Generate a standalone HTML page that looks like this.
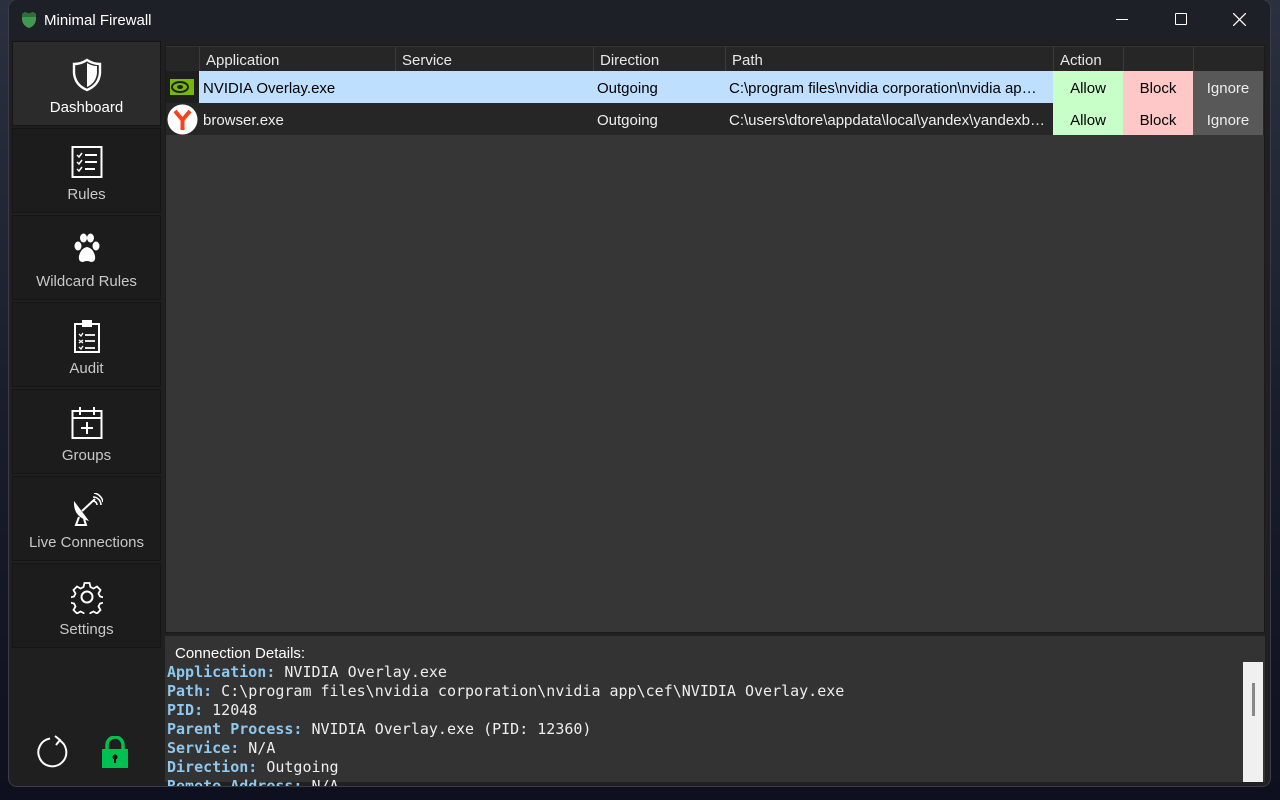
<!DOCTYPE html>
<html><head><meta charset="utf-8"><style>
*{margin:0;padding:0;box-sizing:border-box}
body{width:1280px;height:800px;overflow:hidden;background:linear-gradient(180deg,#2b3040 0%,#1a1d2c 50%,#0e1020 100%);font-family:"Segoe UI","Liberation Sans",sans-serif;position:relative}
.win{position:absolute;left:9px;top:0;width:1261px;height:786px;background:#202020;border-radius:8px;overflow:hidden;box-shadow:0 0 0 1px #3a3d44}
.title{position:absolute;left:0;top:0;width:100%;height:40px;background:#1e2027;color:#fff;font-size:15px}
.title .t{position:absolute;left:35px;top:12px}
.side{position:absolute;left:2px;top:40px;width:150px;height:746px;background:#1f1f1f}
.btn{position:absolute;left:1px;width:149px;height:85px;background:#1c1c1c;border:1px solid #151515;color:#c8c8c8;font-size:15px;text-align:center}
.btn.act{background:#2b2b2b;color:#fff}
.btn svg{position:absolute;left:58px;top:16px}
.btn span{position:absolute;left:0;right:0;top:57px}
.main{position:absolute;left:156px;top:45px;width:1100px;height:588px;background:#363636;border:1px solid #1a1a1a}
.hdr{position:absolute;left:0;top:1px;height:24px;width:100%;background:#262626;color:#e8e8e8;font-size:15px}
.hdr div,.row div{position:absolute;top:0;height:100%;white-space:nowrap;overflow:hidden}
.hdr div{border-left:1px solid #3b3b3b;padding:5px 6px 0}
.row{position:absolute;left:0;height:32px;width:100%;font-size:15px}
.row div{padding:9px 4px 0;color:#eee}
.det{position:absolute;left:156px;top:636px;width:1100px;height:146px;background:#333}
.det .h{position:absolute;left:10px;top:9px;color:#fff;font-size:15px}
.det pre{position:absolute;left:2px;top:27px;font-family:"DejaVu Sans Mono","Liberation Mono",monospace;font-size:15px;line-height:19px;color:#eee}
.det b{color:#8fc8ee}
.sb{position:absolute;left:1234px;top:662px;width:20px;height:120px;background:#f0f0f0}
</style></head><body>
<div class="win">
 <div class="title">
  <svg style="position:absolute;left:12px;top:11px" width="16" height="18" viewBox="0 0 16 18"><path d="M1 3 L4 1 L8 2.5 L12 1 L15 3 L15 9 Q14 15 8 17 Q2 15 1 9Z" fill="#3f9a4f"/><path d="M1 3 L4 1 L8 2.5 L12 1 L15 3 L15 6 L1 6Z" fill="#2d6e39"/></svg>
  <span class="t">Minimal Firewall</span>
  <div style="position:absolute;left:1107px;top:19px;width:12px;height:1px;background:#fff"></div>
  <div style="position:absolute;left:1166px;top:13px;width:12px;height:12px;border:1.3px solid #fff;border-radius:1px"></div>
  <svg style="position:absolute;left:1224px;top:13px" width="13" height="13"><path d="M0 0L13 13M13 0L0 13" stroke="#fff" stroke-width="1.3"/></svg>
 </div>
 <div class="side">
  <div class="btn act" style="top:1px"><svg width="32" height="34" viewBox="0 0 32 34"><path d="M16 2 Q10 6 3 6 L3 15 Q4 27 16 32 Q28 27 29 15 L29 6 Q22 6 16 2Z" fill="none" stroke="#fff" stroke-width="2.4"/><path d="M16 5 Q21 8 26 8 L26 15 Q25 25 16 29Z" fill="#fff"/></svg><span>Dashboard</span></div>
  <div class="btn" style="top:88px"><svg width="32" height="34" viewBox="0 0 32 34"><rect x="1.5" y="2" width="29" height="30" fill="none" stroke="#fff" stroke-width="2"/><path d="M6 10l2 2 3-4M6 17l2 2 3-4M6 24l2 2 3-4" fill="none" stroke="#fff" stroke-width="1.5"/><path d="M14 10h12M14 17h12M14 24h10" stroke="#fff" stroke-width="2"/></svg><span>Rules</span></div>
  <div class="btn" style="top:175px"><svg width="32" height="34" viewBox="0 0 32 34"><ellipse cx="7" cy="14" rx="3.5" ry="4.5" fill="#fff"/><ellipse cx="12.5" cy="6" rx="3.5" ry="4.5" fill="#fff"/><ellipse cx="19.5" cy="6" rx="3.5" ry="4.5" fill="#fff"/><ellipse cx="25" cy="14" rx="3.5" ry="4.5" fill="#fff"/><path d="M16 15 Q10 16 8 24 Q7 30 12 30 Q16 28 20 30 Q25 30 24 24 Q22 16 16 15Z" fill="#fff"/></svg><span>Wildcard Rules</span></div>
  <div class="btn" style="top:262px"><svg width="32" height="34" viewBox="0 0 32 34"><rect x="4" y="5" width="24" height="28" fill="none" stroke="#fff" stroke-width="2"/><rect x="11" y="1" width="10" height="7" fill="#fff"/><path d="M8 15l2 2 2-3M8 21l4 3M12 21l-4 3M8 28l2 2 2-3" fill="none" stroke="#fff" stroke-width="1.3"/><path d="M14 16h10M14 22h10M14 29h10" stroke="#fff" stroke-width="1.8"/></svg><span>Audit</span></div>
  <div class="btn" style="top:349px"><svg width="32" height="34" viewBox="0 0 32 34"><rect x="1.5" y="5" width="29" height="27" fill="none" stroke="#fff" stroke-width="2"/><path d="M1.5 12h29M9 1v8M23 1v8M16 16v12M10 22h12" stroke="#fff" stroke-width="2"/></svg><span>Groups</span></div>
  <div class="btn" style="top:436px"><svg width="32" height="34" viewBox="0 0 32 34"><path d="M3 8 Q2 24 18 28 Z" fill="#fff"/><path d="M8 24 L5 32 H15 L13 26" fill="none" stroke="#fff" stroke-width="2"/><path d="M11 18 L24 6" stroke="#fff" stroke-width="2"/><path d="M22 8a4 4 0 0 1 4 4M22 4a8 8 0 0 1 8 8M23 0a11 11 0 0 1 9 9" fill="none" stroke="#fff" stroke-width="1.6"/></svg><span>Live Connections</span></div>
  <div class="btn" style="top:523px"><svg width="32" height="34" viewBox="0 0 32 34"><circle cx="16" cy="17" r="5.5" fill="none" stroke="#fff" stroke-width="2"/><path d="M13.5 3h5l1 4 3 1.5 3.5-2 3.5 3.5-2 3.5 1.5 3 4 1v5l-4 1-1.5 3 2 3.5-3.5 3.5-3.5-2-3 1.5-1 4h-5l-1-4-3-1.5-3.5 2-3.5-3.5 2-3.5-1.5-3-4-1v-5l4-1 1.5-3-2-3.5 3.5-3.5 3.5 2 3-1.5z" fill="none" stroke="#fff" stroke-width="1.8"/></svg><span>Settings</span></div>
  <svg style="position:absolute;left:24px;top:695px" width="36" height="36" viewBox="0 0 36 36"><path d="M24 5 A14 14 0 1 1 15 3.5" fill="none" stroke="#fff" stroke-width="2"/><path d="M20 1 L25 5 L21 10" fill="none" stroke="#fff" stroke-width="2"/></svg>
  <svg style="position:absolute;left:90px;top:696px" width="28" height="32" viewBox="0 0 28 32"><path d="M6 14 V9 a8 8 0 0 1 16 0 V14" fill="none" stroke="#00c050" stroke-width="3.5"/><rect x="1" y="13" width="26" height="19" fill="#00c050"/><circle cx="14" cy="21" r="2.5" fill="#111"/><rect x="13" y="21" width="2" height="6" fill="#111"/></svg>
 </div>
 <div class="main">
  <div class="hdr">
   <div style="left:0;width:33px;border-left:none"></div>
   <div style="left:33px;width:196px">Application</div>
   <div style="left:229px;width:198px">Service</div>
   <div style="left:427px;width:132px">Direction</div>
   <div style="left:559px;width:328px">Path</div>
   <div style="left:887px;width:70px">Action</div>
   <div style="left:957px;width:70px"></div>
   <div style="left:1027px;width:70px"></div>
  </div>
  <div class="row" style="top:25px;background:#2a2a2a">
   <div style="left:0;width:33px;background:#1e1e1e;padding-top:8px"><svg width="24" height="16" viewBox="0 0 24 16"><rect x="0" y="0" width="24" height="16" fill="#76b900"/><ellipse cx="10" cy="8" rx="8" ry="5" fill="none" stroke="#1e1e1e" stroke-width="2"/><ellipse cx="10" cy="8" rx="3" ry="2" fill="#1e1e1e"/></svg></div>
   <div style="left:33px;width:854px;background:#bfdfff"></div>
   <div style="left:33px;width:196px;color:#000;padding-left:4px">NVIDIA Overlay.exe</div>
   <div style="left:427px;width:132px;color:#000">Outgoing</div>
   <div style="left:559px;width:328px;color:#000;text-overflow:ellipsis">C:\program files\nvidia corporation\nvidia ap…</div>
   <div style="left:887px;width:70px;background:#c8ffc8;color:#000;text-align:center">Allow</div>
   <div style="left:957px;width:70px;background:#ffc8c8;color:#000;text-align:center">Block</div>
   <div style="left:1027px;width:70px;background:#585858;color:#eee;text-align:center">Ignore</div>
  </div>
  <div class="row" style="top:57px;background:#262626">
   <div style="left:0;width:33px;padding:1px"><svg width="31" height="31" viewBox="0 0 31 31"><circle cx="15.5" cy="15.5" r="15" fill="#fff"/><path d="M8 7 L15.5 16 L23 7" fill="none" stroke="#fc3f1d" stroke-width="4"/><path d="M15.5 16 V26" stroke="#fc3f1d" stroke-width="4"/></svg></div>
   <div style="left:33px;width:196px;padding-left:4px">browser.exe</div>
   <div style="left:427px;width:132px">Outgoing</div>
   <div style="left:559px;width:328px">C:\users\dtore\appdata\local\yandex\yandexb…</div>
   <div style="left:887px;width:70px;background:#c8ffc8;color:#000;text-align:center">Allow</div>
   <div style="left:957px;width:70px;background:#ffc8c8;color:#000;text-align:center">Block</div>
   <div style="left:1027px;width:70px;background:#585858;color:#eee;text-align:center">Ignore</div>
  </div>
 </div>
 <div class="det">
  <div class="h">Connection Details:</div>
<pre><b>Application:</b> NVIDIA Overlay.exe
<b>Path:</b> C:\program files\nvidia corporation\nvidia app\cef\NVIDIA Overlay.exe
<b>PID:</b> 12048
<b>Parent Process:</b> NVIDIA Overlay.exe (PID: 12360)
<b>Service:</b> N/A
<b>Direction:</b> Outgoing
<b>Remote Address:</b> N/A</pre>
 </div>
 <div class="sb"><div style="position:absolute;left:9px;top:21px;width:3px;height:33px;background:#888"></div></div>
</div>
</body></html>
